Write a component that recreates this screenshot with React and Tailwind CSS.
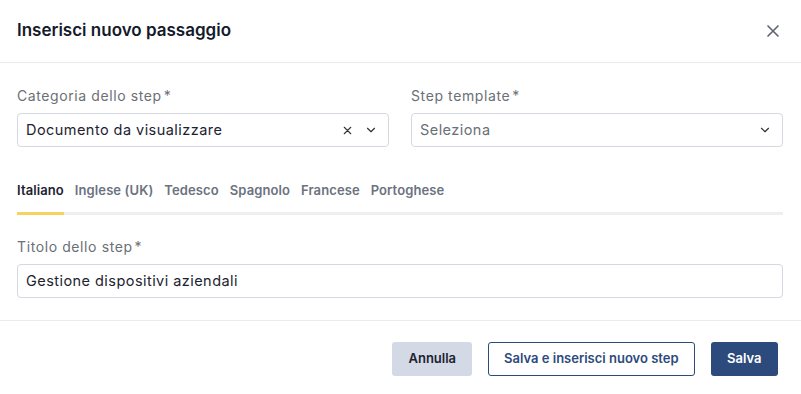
import React from "react";

const XIcon = ({ className }) => (
  <svg className={className} viewBox="0 0 24 24" fill="none" stroke="currentColor" strokeWidth="2" strokeLinecap="round">
    <path d="M6 6l12 12M18 6L6 18" />
  </svg>
);

const Chevron = ({ className }) => (
  <svg className={className} viewBox="0 0 24 24" fill="none" stroke="currentColor" strokeWidth="2" strokeLinecap="round" strokeLinejoin="round">
    <path d="M6 9l6 6 6-6" />
  </svg>
);

const Label = ({ children }) => (
  <div className="text-[14px] tracking-[0.6px] text-[#6b6f76] mb-[7px] leading-[20px]">
    {children}
    <span className="ml-[2px]">*</span>
  </div>
);

const App = () => {
  const tabs = ["Italiano", "Inglese (UK)", "Tedesco", "Spagnolo", "Francese", "Portoghese"];

  return (
    <div
      className="w-[801px] h-[394px] bg-white text-[#1d2230]"
      style={{ fontFamily: "Inter, 'Noto Sans', sans-serif" }}
    >
      {/* header */}
      <div className="h-[63px] flex items-center justify-between pl-[17px] pr-[18px] border-b border-[#ececec]">
        <h2 className="text-[17px] font-semibold text-[#141a2b]">Inserisci nuovo passaggio</h2>
        <XIcon className="w-[20px] h-[20px] text-[#5f6570]" />
      </div>

      {/* body */}
      <div className="pl-[17px] pr-[18px] pt-[23px] pb-[22px] border-b border-[#ececec]">
        <div className="grid grid-cols-2 gap-[22px]">
          <div>
            <Label>Categoria dello step</Label>
            <div className="h-[34px] border border-[#d4d8e0] rounded-[4px] flex items-center pl-[8px] pr-[10px]">
              <span className="flex-1 text-[14.5px] tracking-[0.45px]">Documento da visualizzare</span>
              <XIcon className="w-[13px] h-[13px] text-[#333] mr-[10px]" />
              <Chevron className="w-[14px] h-[14px] text-[#333]" />
            </div>
          </div>
          <div>
            <Label>Step template</Label>
            <div className="h-[34px] border border-[#d4d8e0] rounded-[4px] flex items-center pl-[8px] pr-[10px]">
              <span className="flex-1 text-[14.5px] tracking-[0.45px] text-[#6b6f76]">Seleziona</span>
              <Chevron className="w-[14px] h-[14px] text-[#333]" />
            </div>
          </div>
        </div>

        {/* tabs */}
        <div className="mt-[34px] flex border-b-[3px] border-[#efefef]">
          {tabs.map((t, i) => (
            <div
              key={t}
              className={
                i === 0
                  ? "text-[13px] tracking-[0.1px] font-semibold text-[#1d2230] pb-[11px] border-b-[3px] border-[#f4d35e] -mb-[3px] mr-[11px]"
                  : "text-[13px] tracking-[0.1px] font-semibold text-[#6b7280] pb-[11px] mr-[11px]"
              }
            >
              {t}
            </div>
          ))}
        </div>

        <div className="mt-[22px]">
          <Label>Titolo dello step</Label>
          <div className="h-[34px] border border-[#d4d8e0] rounded-[4px] flex items-center pl-[8px]">
            <span className="text-[14.5px] tracking-[0.45px]">Gestione dispositivi aziendali</span>
          </div>
        </div>
      </div>

      {/* footer */}
      <div className="flex justify-end items-center pt-[21px] pr-[23px]">
        <button className="h-[34px] px-[16px] rounded-[3px] bg-[#d3dae6] text-[13px] font-semibold text-[#1d2230]">
          Annulla
        </button>
        <button className="ml-[16px] h-[34px] px-[15px] rounded-[3px] border border-[#2d4a7c] text-[13px] font-semibold text-[#2d4a7c]">
          Salva e inserisci nuovo step
        </button>
        <button className="ml-[16px] h-[34px] px-[16.5px] rounded-[3px] bg-[#2d4a7c] text-[13px] font-semibold text-white">
          Salva
        </button>
      </div>
    </div>
  );
};

export default App;
